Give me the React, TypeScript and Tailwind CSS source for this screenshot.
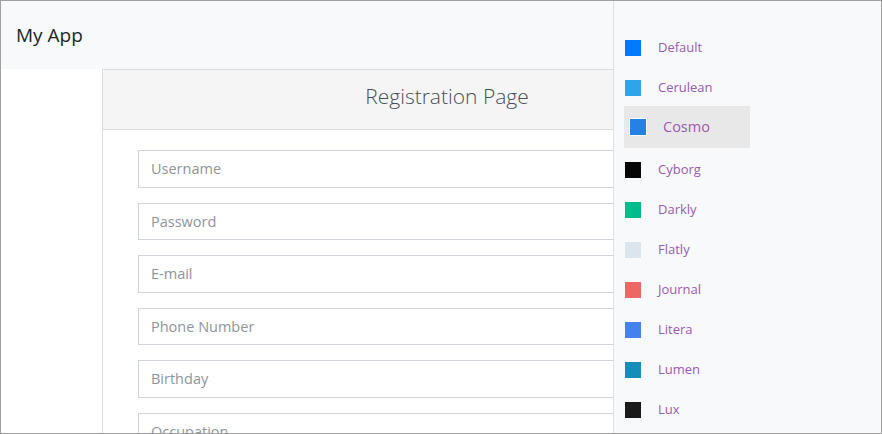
const themes = [
  { name: 'Default', color: 'bg-[#007bff]' },
  { name: 'Cerulean', color: 'bg-[#2fa4e7]' },
  { name: 'Cosmo', color: 'bg-[#2780e3]', active: true },
  { name: 'Cyborg', color: 'bg-[#060606]' },
  { name: 'Darkly', color: 'bg-[#00bc8c]' },
  { name: 'Flatly', color: 'bg-[#dce4ec]' },
  { name: 'Journal', color: 'bg-[#eb6864]' },
  { name: 'Litera', color: 'bg-[#4582ec]' },
  { name: 'Lumen', color: 'bg-[#158cba]' },
  { name: 'Lux', color: 'bg-[#1a1a1a]' },
];

const fields = ['Username', 'Password', 'E-mail', 'Phone Number', 'Birthday', 'Occupation'];

function ThemeItem({ name, color, active }: { name: string; color: string; active?: boolean }) {
  if (active) {
    return (
      <div className="flex items-center h-[42px] w-[126px] -ml-px mt-[-2px] mb-[2px] bg-[#e8e8e8] pl-[5px]">
        <span className={`w-[18px] h-[18px] border border-white ${color}`} />
        <span className="ml-[16px] text-[14.5px] text-[#9b59b6]">{name}</span>
      </div>
    );
  }
  return (
    <div className="flex items-center h-[40px]">
      <span className={`w-4 h-4 ${color}`} />
      <span className="ml-[17px] text-[13px] text-[#9b59b6]">{name}</span>
    </div>
  );
}

export default function App() {
  return (
    <div
      className="w-[882px] h-[434px] border border-[#a0a0a0] flex overflow-hidden bg-white"
      style={{ fontFamily: '"Open Sans", "Noto Sans", sans-serif' }}
    >
      <div className="flex-1 min-w-0 flex flex-col overflow-hidden">
        <div className="h-[68px] shrink-0 bg-[#f8f9fa] flex items-center pl-[15px]">
          <span className="text-[19px] text-[#212529]">My App</span>
        </div>
        <div className="ml-[101px] w-[690px] shrink-0 border border-[#dcdcdc] flex flex-col">
          <div className="h-[60px] bg-[#f5f5f5] border-b border-[#dcdcdc] flex items-center justify-center pb-[5px]">
            <span className="text-[21px] font-light text-[#495057]">Registration Page</span>
          </div>
          <div className="pt-[20px] pl-[35px] pr-[35px] flex flex-col gap-[15px]">
            {fields.map((f) => (
              <input
                key={f}
                type="text"
                placeholder={f}
                className="h-[37.5px] shrink-0 border border-[#ced4da] px-3 text-[14.5px] text-[#495057] placeholder:text-[#8e959c] outline-none"
              />
            ))}
          </div>
        </div>
      </div>
      <div className="w-[268px] shrink-0 bg-[#f8f9fa] border-l border-[#e0e0e0] pt-[27px] pl-[11px]">
        {themes.map((t) => (
          <ThemeItem key={t.name} {...t} />
        ))}
      </div>
    </div>
  );
}
